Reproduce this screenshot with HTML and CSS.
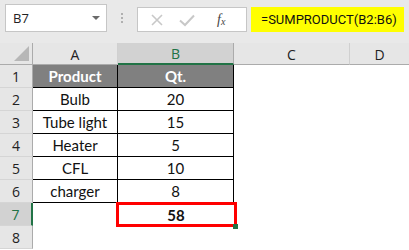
FILE: index.html
```html
<!DOCTYPE html>
<html>
<head>
<meta charset="utf-8">
<link rel="stylesheet" href="styles.css">
</head>
<body>
<div class="app">
  <div class="toolbar">
    <div class="namebox"><span class="name">B7</span><span class="drop"></span></div>
    <div class="dots"><i></i><i></i><i></i></div>
    <div class="fxbox">
      <svg class="ico" width="16" height="16" viewBox="0 0 16 16"><path d="M3 3 L13 13 M13 3 L3 13" stroke="#c8c8c8" stroke-width="1.6" fill="none"/></svg>
      <svg class="ico" width="18" height="16" viewBox="0 0 18 16"><path d="M2 8.5 L7 13 L16 3.5" stroke="#c8c8c8" stroke-width="2" fill="none"/></svg>
      <span class="fx">f<sub>x</sub></span>
    </div>
    <div class="formula">=SUMPRODUCT(B2:B6)</div>
  </div>
  <div class="sheet">
    <div class="corner"><span class="tri"></span></div>
    <div class="colh">A</div>
    <div class="colh sel">B</div>
    <div class="colh">C</div>
    <div class="colh last">D</div>

    <div class="rowh">1</div><div class="c head">Product</div><div class="c head bl">Qt.</div><div class="e"></div><div class="e"></div>
    <div class="rowh">2</div><div class="c">Bulb</div><div class="c bl">20</div><div class="e"></div><div class="e"></div>
    <div class="rowh">3</div><div class="c">Tube light</div><div class="c bl">15</div><div class="e"></div><div class="e"></div>
    <div class="rowh">4</div><div class="c">Heater</div><div class="c bl">5</div><div class="e"></div><div class="e"></div>
    <div class="rowh">5</div><div class="c">CFL</div><div class="c bl">10</div><div class="e"></div><div class="e"></div>
    <div class="rowh">6</div><div class="c">charger</div><div class="c bl">8</div><div class="e"></div><div class="e"></div>
    <div class="rowh sel">7</div><div class="e"></div><div class="e total"><span class="val">58</span><span class="redbox"></span><span class="handle"></span></div><div class="e"></div><div class="e"></div>
    <div class="rowh">8</div><div class="e"></div><div class="e"></div><div class="e"></div><div class="e"></div>
  </div>
</div>
</body>
</html>
```

FILE: styles.css
```css
* { box-sizing: border-box; }
html, body { margin: 0; padding: 0; background: #ffffff; }
.app { width: 409px; height: 250px; overflow: hidden; font-family: "Open Sans", "Noto Sans", sans-serif; }

.toolbar {
  height: 43px;
  background: #e9e9e9;
  display: flex;
  align-items: flex-start;
  padding: 4px 0 0 5px;
}
.namebox {
  width: 102px; height: 28px;
  background: #fff;
  border: 1px solid #c6c6c6;
  display: flex; align-items: center; justify-content: space-between;
  padding: 0 6px 0 7px;
}
.name { font-size: 13px; color: #222; }
.drop { width: 0; height: 0; border-left: 4px solid transparent; border-right: 4px solid transparent; border-top: 4px solid #6a6a6a; }
.dots { width: 30px; height: 28px; display: flex; flex-direction: column; align-items: center; justify-content: center; gap: 2px; }
.dots i { display: block; width: 2px; height: 2px; background: #b0b0b0; }
.fxbox {
  width: 110px; height: 25px; margin-top: 3px;
  background: #fff; border: 1px solid #c6c6c6;
  display: flex; align-items: center; gap: 13px;
  padding-left: 11px;
}
.fx { font-family: "Liberation Serif", serif; font-style: italic; font-size: 14px; color: #444; margin-left: 8px; }
.fx sub { font-size: 10px; vertical-align: -1px; }
.formula {
  margin-left: 4px; margin-top: 3px;
  width: 153px; height: 25px;
  background: #ffff00;
  font-family: "Roboto", sans-serif;
  font-size: 13px; line-height: 25px; color: #111;
  padding-left: 10px;
  white-space: nowrap;
}

.sheet {
  display: grid;
  grid-template-columns: 33px 85px 116px 116px 59px;
  grid-template-rows: 22px repeat(8, 23px);
  background: #fff;
}
.corner { background: #e6e6e6; border-right: 1px solid #ababab; border-bottom: 1px solid #ababab; position: relative; }
.tri { position: absolute; right: 3px; bottom: 3px; width: 0; height: 0; border-left: 15px solid transparent; border-bottom: 15px solid #b7b7b7; }
.colh {
  background: #e6e6e6; border-bottom: 1px solid #ababab; border-right: 1px solid #d0d0d0;
  display: flex; align-items: center; justify-content: center;
  font-size: 14px; color: #222; padding-top: 1px;
}
.colh.sel { background: #d2d2d2; border-bottom: 2px solid #217346; border-right: 1px solid #ababab; color: #217346; }
.colh.last { border-right: none; }
.rowh {
  background: #e6e6e6; border-right: 1px solid #ababab; border-bottom: 1px solid #d5d5d5;
  display: flex; align-items: center; justify-content: center;
  font-size: 14px; color: #222;
}
.rowh.sel { background: #d2d2d2; border-right: 2px solid #217346; color: #217346; }
.c {
  font-family: "Lato", "Open Sans", sans-serif; font-size: 15px; color: #111;
  display: flex; align-items: flex-end; justify-content: center; padding-bottom: 2px;
  border-bottom: 1px solid #000; border-right: 1px solid #000;
}
.c.head { background: #808080; color: #fff; font-weight: bold; }
.e { position: relative; }
.total { display: flex; align-items: flex-end; justify-content: center; padding-bottom: 2px; font-family: "Lato", sans-serif; font-weight: bold; font-size: 15px; color: #111; }
.redbox { position: absolute; left: -2px; top: -1px; right: -3px; bottom: -1px; border: 3px solid #ff0000; }
.handle { position: absolute; right: -4px; bottom: -3px; width: 5px; height: 5px; background: #217346; }
```
